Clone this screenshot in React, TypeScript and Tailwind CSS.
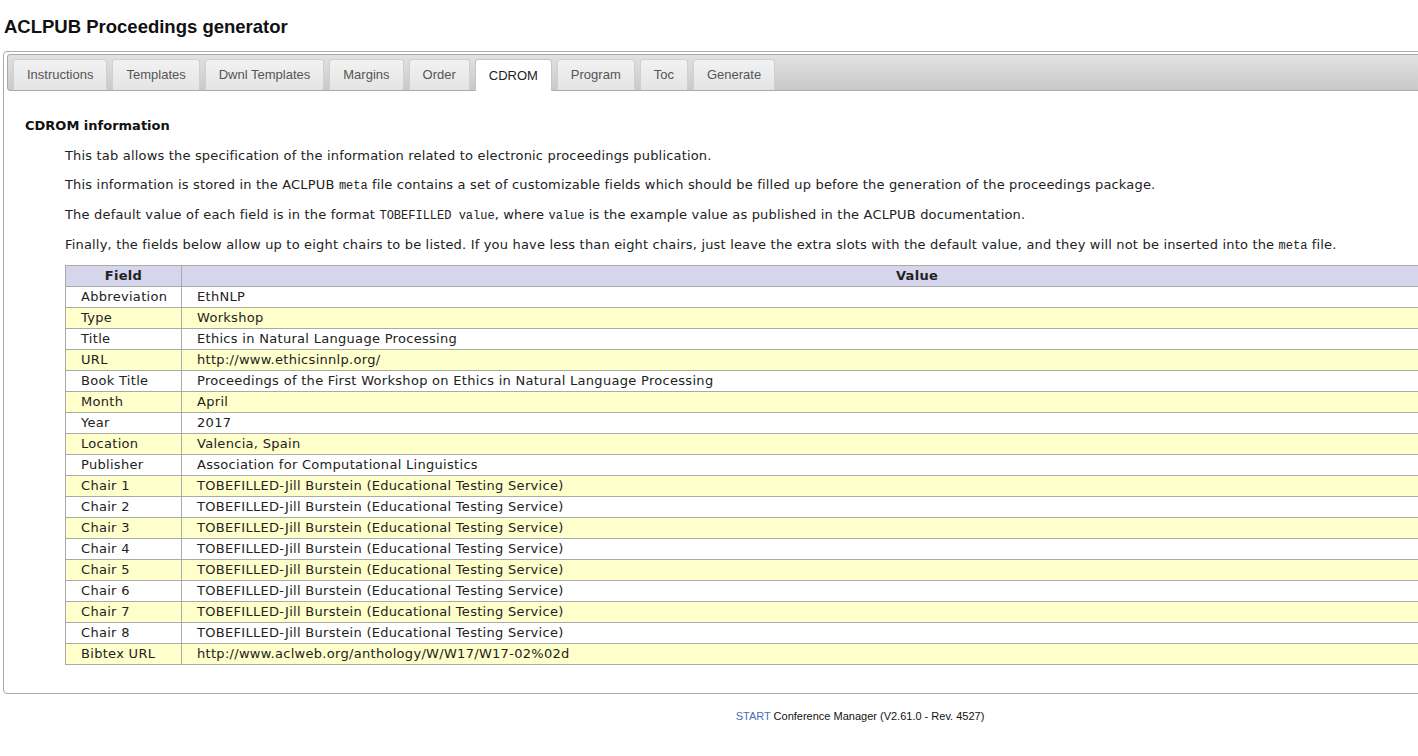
import React from "react";

const tabs = ["Instructions", "Templates", "Dwnl Templates", "Margins", "Order", "CDROM", "Program", "Toc", "Generate"];

const chair = "TOBEFILLED-Jill Burstein (Educational Testing Service)";

const rows: [string, string][] = [
  ["Abbreviation", "EthNLP"],
  ["Type", "Workshop"],
  ["Title", "Ethics in Natural Language Processing"],
  ["URL", "http://www.ethicsinnlp.org/"],
  ["Book Title", "Proceedings of the First Workshop on Ethics in Natural Language Processing"],
  ["Month", "April"],
  ["Year", "2017"],
  ["Location", "Valencia, Spain"],
  ["Publisher", "Association for Computational Linguistics"],
  ["Chair 1", chair],
  ["Chair 2", chair],
  ["Chair 3", chair],
  ["Chair 4", chair],
  ["Chair 5", chair],
  ["Chair 6", chair],
  ["Chair 7", chair],
  ["Chair 8", chair],
  ["Bibtex URL", "http://www.aclweb.org/anthology/W/W17/W17-02%02d"],
];

const Code = ({ children }: { children: React.ReactNode }) => (
  <code className="font-['Liberation_Mono',monospace] text-[12px] tracking-normal">{children}</code>
);

export default function App() {
  return (
    <div className="w-full h-[756px] overflow-hidden bg-white">
      <div className="w-[1720px] font-['Liberation_Sans',Arial,sans-serif] text-[#222]">
        <h1 className="pl-[4px] pt-[15px] h-[51px] text-[18.5px] font-bold leading-[24px] text-[#111]">
          ACLPUB Proceedings generator
        </h1>
        <div className="mx-[3px] border border-[#aaa] rounded-[4px] pb-[28px]">
          <div className="mx-[3px] mt-[2px] h-[37px] flex items-end gap-[5px] pl-[5px] border border-[#aaa] rounded-[3px] bg-gradient-to-b from-[#e2e2e2] to-[#c9c9c9]">
            {tabs.map((t) => {
              const active = t === "CDROM";
              return (
                <div
                  key={t}
                  className={
                    active
                      ? "h-[32px] -mb-px px-[13px] flex items-center text-[13px] text-[#222] bg-white border border-b-0 border-[#c5c5c5] rounded-t-[3px]"
                      : "h-[31px] px-[13px] flex items-center text-[13px] text-[#555] bg-gradient-to-b from-[#f2f2f2] to-[#e4e4e4] border border-b-0 border-[#d0d0d0] rounded-t-[3px]"
                  }
                >
                  {t}
                </div>
              );
            })}
          </div>
          <div className="font-['DejaVu_Sans',Verdana,sans-serif] text-[13px] text-[#222]">
            <h3 className="pl-[21px] pt-[26px] font-bold text-[13px] leading-[18px] text-[#111]">CDROM information</h3>
            <div className="pl-[61px] pt-[12px] flex flex-col gap-[11px] leading-[18px] tracking-[0.18px]">
              <p>This tab allows the specification of the information related to electronic proceedings publication.</p>
              <p>
                This information is stored in the ACLPUB <Code>meta</Code> file contains a set of customizable fields which should be filled up before the generation of the proceedings package.
              </p>
              <p>
                The default value of each field is in the format <Code>TOBEFILLED value</Code>, where <Code>value</Code> is the example value as published in the ACLPUB documentation.
              </p>
              <p>
                Finally, the fields below allow up to eight chairs to be listed. If you have less than eight chairs, just leave the extra slots with the default value, and they will not be inserted into the <Code>meta</Code> file.
              </p>
            </div>
            <table className="ml-[61px] mt-[10px] w-[1588px] border-collapse text-[13px] tracking-[0.3px]">
              <thead>
                <tr className="bg-[#d5d5ec] h-[21px]">
                  <th className="w-[116px] border border-[#aaa] font-bold text-center leading-[18px]">Field</th>
                  <th className="border border-[#aaa] font-bold text-center leading-[18px]">Value</th>
                </tr>
              </thead>
              <tbody>
                {rows.map(([f, v], i) => (
                  <tr key={f} className={i % 2 === 1 ? "bg-[#ffffcc] h-[21px]" : "bg-white h-[21px]"}>
                    <td className="border border-[#aaa] pl-[15px] leading-[18px]">{f}</td>
                    <td className="border border-[#aaa] pl-[15px] leading-[18px]">{v}</td>
                  </tr>
                ))}
              </tbody>
            </table>
          </div>
        </div>
        <div className="pt-[14px] text-center text-[11px] text-[#111]">
          <span className="text-[#4a6fb5]">START</span> Conference Manager (V2.61.0 - Rev. 4527)
        </div>
      </div>
    </div>
  );
}
